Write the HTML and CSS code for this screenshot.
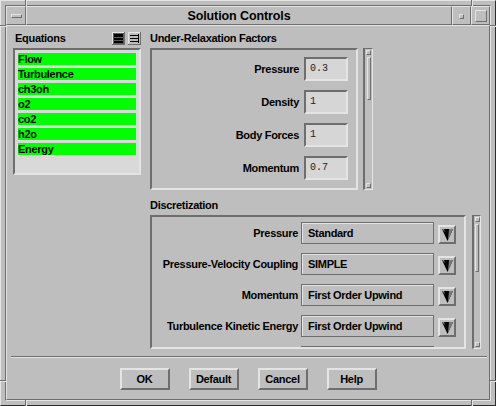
FILE: index.html
```html
<!DOCTYPE html>
<html>
<head>
<meta charset="utf-8">
<link rel="stylesheet" href="styles.css">
</head>
<body>
<div class="window">
  <span class="notch v" style="left:24px;top:-1px"></span>
  <span class="notch v" style="left:470px;top:-1px"></span>
  <span class="notch v" style="left:24px;bottom:-1px"></span>
  <span class="notch v" style="left:470px;bottom:-1px"></span>
  <span class="notch h" style="top:24px;left:-1px"></span>
  <span class="notch h" style="top:24px;right:-1px"></span>
  <span class="notch h" style="top:379px;left:-1px"></span>
  <span class="notch h" style="top:379px;right:-1px"></span>
  <div class="frame">
    <div class="titlebar">
      <div class="tb-cell tb-left"><span class="menu-bar"></span></div>
      <div class="tb-cell tb-title">Solution Controls</div>
      <div class="tb-cell tb-right"><span class="min-box"></span></div>
      <div class="tb-cell tb-right"><span class="max-box"></span></div>
    </div>
    <div class="content">
      <div class="main">
        <div class="left-col">
          <div class="eq-head">
            <span class="hdr eq-title">Equations</span>
            <span class="icons">
              <svg class="ico" width="13" height="13" viewBox="0 0 13 13">
                <rect x="0" y="0" width="13" height="13" fill="#6e6e6e"/>
                <rect x="0" y="0" width="12" height="1" fill="#e4e4e4"/>
                <rect x="0" y="0" width="1" height="12" fill="#e4e4e4"/>
                <rect x="1" y="1" width="11" height="11" fill="#5a5a5a"/>
                <rect x="2" y="2" width="9" height="3" fill="#000"/>
                <rect x="2" y="6" width="9" height="2" fill="#000"/>
                <rect x="2" y="9" width="9" height="2" fill="#000"/>
              </svg>
              <svg class="ico" width="13" height="13" viewBox="0 0 13 13">
                <rect x="0" y="0" width="13" height="13" fill="#6e6e6e"/>
                <rect x="0" y="0" width="12" height="1" fill="#e4e4e4"/>
                <rect x="0" y="0" width="1" height="12" fill="#e4e4e4"/>
                <rect x="1" y="1" width="11" height="11" fill="#bebebe"/>
                <rect x="2" y="3" width="8" height="1" fill="#000"/>
                <rect x="2" y="6" width="8" height="1" fill="#000"/>
                <rect x="2" y="9" width="8" height="1" fill="#000"/>
                <rect x="10" y="2" width="1" height="9" fill="#000"/>
              </svg>
            </span>
          </div>
          <div class="eq-list">
            <div class="eq-item">Flow</div>
            <div class="eq-item">Turbulence</div>
            <div class="eq-item">ch3oh</div>
            <div class="eq-item">o2</div>
            <div class="eq-item">co2</div>
            <div class="eq-item">h2o</div>
            <div class="eq-item">Energy</div>
          </div>
        </div>
        <div class="right-col">
          <div class="hdr sec-hdr">Under-Relaxation Factors</div>
          <div class="panel-row">
            <div class="panel urf">
              <div class="urf-row"><span class="lbl">Pressure</span><span class="num">0.3</span></div>
              <div class="urf-row"><span class="lbl">Density</span><span class="num">1</span></div>
              <div class="urf-row"><span class="lbl">Body Forces</span><span class="num">1</span></div>
              <div class="urf-row"><span class="lbl">Momentum</span><span class="num">0.7</span></div>
            </div>
            <div class="vscroll urf-scroll">
              <span class="sarrow"></span>
              <span class="thumb urf-thumb"></span>
              <span class="sfill"></span>
              <span class="sarrow"></span>
            </div>
          </div>
          <div class="hdr sec-hdr disc-hdr">Discretization</div>
          <div class="panel-row">
            <div class="panel disc">
              <div class="disc-row"><span class="lbl">Pressure</span><span class="opt">Standard</span><span class="drop"><svg width="11" height="12" viewBox="0 0 11 12"><polygon points="0,0 11,0 5.5,12" fill="#000"/><polygon points="7,0 11,0 6,11" fill="#7a7a7a"/><polygon points="0,0 2,0 3,3" fill="#8a8a8a"/></svg></span></div>
              <div class="disc-row"><span class="lbl">Pressure-Velocity Coupling</span><span class="opt">SIMPLE</span><span class="drop"><svg width="11" height="12" viewBox="0 0 11 12"><polygon points="0,0 11,0 5.5,12" fill="#000"/><polygon points="7,0 11,0 6,11" fill="#7a7a7a"/><polygon points="0,0 2,0 3,3" fill="#8a8a8a"/></svg></span></div>
              <div class="disc-row"><span class="lbl">Momentum</span><span class="opt">First Order Upwind</span><span class="drop"><svg width="11" height="12" viewBox="0 0 11 12"><polygon points="0,0 11,0 5.5,12" fill="#000"/><polygon points="7,0 11,0 6,11" fill="#7a7a7a"/><polygon points="0,0 2,0 3,3" fill="#8a8a8a"/></svg></span></div>
              <div class="disc-row"><span class="lbl">Turbulence Kinetic Energy</span><span class="opt">First Order Upwind</span><span class="drop"><svg width="11" height="12" viewBox="0 0 11 12"><polygon points="0,0 11,0 5.5,12" fill="#000"/><polygon points="7,0 11,0 6,11" fill="#7a7a7a"/><polygon points="0,0 2,0 3,3" fill="#8a8a8a"/></svg></span></div>
              <div class="disc-row"><span class="opt"></span><span class="drop"></span></div>
            </div>
            <div class="vscroll disc-scroll">
              <span class="sarrow"></span>
              <span class="thumb disc-thumb"></span>
              <span class="sfill"></span>
              <span class="sarrow"></span>
            </div>
          </div>
        </div>
      </div>
      <div class="separator"></div>
      <div class="buttons">
        <span class="btn">OK</span>
        <span class="btn">Default</span>
        <span class="btn">Cancel</span>
        <span class="btn">Help</span>
      </div>
    </div>
  </div>
</div>
</body>
</html>
```
FILE: styles.css
```css
body {
  margin: 0;
  background: #bebebe;
  font-family: "Liberation Sans", Arial, sans-serif;
  color: #000;
}
.window {
  position: relative;
  width: 496px;
  height: 406px;
  box-sizing: border-box;
  border: 1px solid;
  border-color: #e4e4e4 #2e2e2e #2e2e2e #e4e4e4;
  padding: 4px;
  background: #bebebe;
}
.notch {
  position: absolute;
  box-sizing: border-box;
}
.notch.v {
  width: 2px;
  height: 6px;
  border-left: 1px solid #6e6e6e;
  border-right: 1px solid #e4e4e4;
}
.notch.h {
  width: 6px;
  height: 2px;
  border-top: 1px solid #6e6e6e;
  border-bottom: 1px solid #e4e4e4;
}
.frame {
  height: 100%;
  box-sizing: border-box;
  border: 1px solid;
  border-color: #6e6e6e #e4e4e4 #e4e4e4 #6e6e6e;
  display: flex;
  flex-direction: column;
}
.titlebar {
  display: flex;
  height: 19px;
  flex: none;
}
.tb-cell {
  box-sizing: border-box;
  border: 1px solid;
  border-color: #e4e4e4 #6e6e6e #6e6e6e #e4e4e4;
  display: flex;
  align-items: center;
  justify-content: center;
}
.tb-left { width: 20px; }
.tb-right { width: 19px; }
.tb-title {
  flex: 1;
  font-weight: bold;
  font-size: 12.5px;
  letter-spacing: -0.1px;
}
.menu-bar {
  width: 11px;
  height: 4px;
  box-sizing: border-box;
  border: 1px solid;
  border-color: #e4e4e4 #6e6e6e #6e6e6e #e4e4e4;
}
.min-box {
  width: 5px;
  height: 5px;
  box-sizing: border-box;
  border: 1px solid;
  border-color: #e4e4e4 #6e6e6e #6e6e6e #e4e4e4;
  margin-top: 1px;
}
.max-box {
  width: 12px;
  height: 12px;
  box-sizing: border-box;
  border: 1px solid;
  border-color: #e4e4e4 #6e6e6e #6e6e6e #e4e4e4;
}
.content {
  flex: 1;
  box-sizing: border-box;
  border: 1px solid;
  border-color: #e4e4e4 #6e6e6e #6e6e6e #e4e4e4;
  padding: 6px 6px 0 6px;
  display: flex;
  flex-direction: column;
}
.main {
  display: flex;
  gap: 9px;
}
.left-col {
  width: 128px;
  flex: none;
}
.hdr {
  font-weight: bold;
  font-size: 11px;
  letter-spacing: -0.3px;
  line-height: 13px;
}
.eq-head {
  height: 13px;
  display: flex;
  align-items: center;
  justify-content: space-between;
}
.eq-title { padding-left: 2px; }
.icons {
  display: flex;
  gap: 3px;
}
.ico { display: block; }
.eq-list {
  margin-top: 3px;
  height: 127px;
  box-sizing: border-box;
  border: 2px solid;
  border-color: #6e6e6e #e4e4e4 #e4e4e4 #6e6e6e;
  background: #d9d9d9;
  padding: 3px;
  display: flex;
  flex-direction: column;
  gap: 3px;
}
.eq-item {
  height: 12px;
  line-height: 12px;
  background: #00ff00;
  font-weight: bold;
  font-size: 11px;
  letter-spacing: -0.3px;
}
.right-col {
  display: flex;
  flex-direction: column;
}
.sec-hdr { margin-bottom: 3px; }
.disc-hdr { margin-top: 9px; }
.panel-row {
  display: flex;
  align-items: flex-start;
}
.panel {
  box-sizing: border-box;
  border: 2px solid;
  border-color: #6e6e6e #e4e4e4 #e4e4e4 #6e6e6e;
  display: flex;
  flex-direction: column;
  gap: 9px;
  overflow: hidden;
}
.urf {
  width: 208px;
  height: 142px;
  padding: 7px 8px 0 0;
}
.disc {
  width: 316px;
  height: 134px;
  padding: 5px 8px 0 0;
}
.lbl {
  font-weight: bold;
  font-size: 11px;
  letter-spacing: -0.3px;
  white-space: nowrap;
}
.urf-row {
  display: flex;
  align-items: center;
  justify-content: flex-end;
  gap: 5px;
  height: 24px;
  flex: none;
}
.num {
  width: 44px;
  height: 24px;
  box-sizing: border-box;
  border: 2px solid;
  border-color: #6e6e6e #e4e4e4 #e4e4e4 #6e6e6e;
  background: #d6d6d6;
  font-family: "Liberation Mono", "DejaVu Sans Mono", monospace;
  font-size: 10px;
  line-height: 20px;
  padding-left: 4px;
  color: #222;
}
.disc-row {
  display: flex;
  align-items: flex-start;
  justify-content: flex-end;
  height: 22px;
  flex: none;
}
.disc-row .lbl {
  line-height: 22px;
}
.opt {
  margin-left: 3px;
  width: 133px;
  height: 22px;
  box-sizing: border-box;
  border: 1px solid #6e6e6e;
  box-shadow: inset 1px 1px 0 #e4e4e4;
  font-weight: bold;
  font-size: 11px;
  letter-spacing: -0.3px;
  line-height: 20px;
  padding-left: 6px;
  white-space: nowrap;
}
.drop {
  margin-left: 4px;
  margin-top: 3px;
  width: 18px;
  height: 19px;
  box-sizing: border-box;
  border: 2px solid;
  border-color: #e4e4e4 #6e6e6e #6e6e6e #e4e4e4;
  display: flex;
  align-items: center;
  justify-content: center;
}
.drop svg { display: block; }
.vscroll {
  box-sizing: border-box;
  border-style: solid;
  border-width: 1px 1px 1px 2px;
  border-color: #6e6e6e #e4e4e4 #e4e4e4 #6e6e6e;
  display: flex;
  flex-direction: column;
  align-items: center;
  padding: 1px 0;
}
.urf-scroll {
  margin-left: 5px;
  width: 10px;
  height: 142px;
}
.disc-scroll {
  margin-left: 6px;
  width: 9px;
  height: 134px;
}
.sarrow {
  width: 5px;
  height: 5px;
  box-sizing: border-box;
  border: 1px solid;
  border-color: #e4e4e4 #6e6e6e #6e6e6e #e4e4e4;
  flex: none;
}
.thumb {
  width: 4px;
  box-sizing: border-box;
  border: 1px solid;
  border-color: #e4e4e4 #6e6e6e #6e6e6e #e4e4e4;
  margin-top: 2px;
  flex: none;
}
.urf-thumb { height: 43px; }
.disc-thumb { height: 48px; }
.sfill { flex: 1; }
.separator {
  margin: 7px -4px 0 -2px;
  height: 2px;
  box-sizing: border-box;
  border-top: 1px solid #6e6e6e;
  border-bottom: 1px solid #e4e4e4;
}
.buttons {
  margin-top: 10px;
  display: flex;
  justify-content: center;
  gap: 19px;
}
.btn {
  width: 50px;
  height: 22px;
  box-sizing: border-box;
  border: 2px solid;
  border-color: #e4e4e4 #6e6e6e #6e6e6e #e4e4e4;
  font-weight: bold;
  font-size: 11px;
  letter-spacing: -0.3px;
  line-height: 18px;
  text-align: center;
}
```
